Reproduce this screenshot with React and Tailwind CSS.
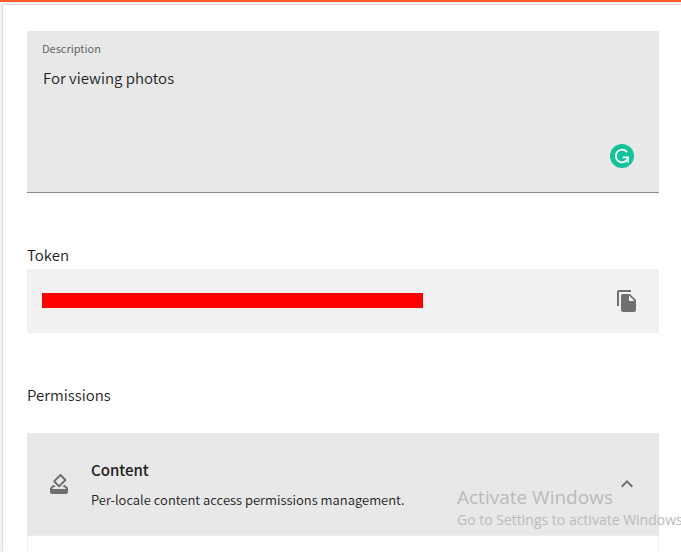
import React, { useState } from 'react';
import { MdFileCopy, MdHowToVote, MdExpandLess, MdExpandMore } from 'react-icons/md';

const GrammarBadge = () => (
  <svg viewBox="0 0 24 24" className="h-6 w-6" fill="none" aria-hidden="true">
    <circle cx="12" cy="12" r="12" fill="#15c39a" />
    <path
      d="M16.6 7.6A6.3 6.3 0 1 0 17.6 15"
      stroke="#fff"
      strokeWidth="1.7"
      strokeLinecap="round"
    />
    <path d="M13.4 13.4H18.2V18" stroke="#fff" strokeWidth="1.7" strokeLinecap="round" strokeLinejoin="round" />
  </svg>
);

const App = () => {
  const [description, setDescription] = useState('For viewing photos');
  const [open, setOpen] = useState(true);

  return (
    <div className="relative flex min-h-screen flex-col overflow-hidden border-t-2 border-[#ff5a26] bg-[#f5f5f5] pt-[3px] pl-[3px] font-['Noto_Sans_CJK_SC',sans-serif] font-[350] text-[#212121]">
      <main className="flex grow flex-col bg-white pt-[26px] pr-[22px] pl-6 shadow-[0_0_2px_rgba(0,0,0,0.3)]">
        {/* Description */}
        <div className="relative flex flex-col border-b border-[#8a8a8a] bg-[#e8e8e8] px-4 pt-[7px] pb-0.5">
          <label htmlFor="description" className="-ml-px text-[11px] leading-5 font-normal text-[#666]">
            Description
          </label>
          <textarea
            id="description"
            rows={5}
            value={description}
            onChange={(e) => setDescription(e.target.value)}
            spellCheck={false}
            className="mt-[7px] w-full resize-none bg-transparent text-[15px] leading-[25px] text-[#212121] outline-none"
          />
          <span className="absolute right-[25px] bottom-6">
            <GrammarBadge />
          </span>
        </div>

        {/* Token */}
        <section className="mt-[50px]">
          <h2 className="pb-0.5 text-[15px] leading-6">Token</h2>
          <div className="flex h-16 items-center justify-between bg-[#f1f1f1] pr-5 pl-[15px]">
            <div className="mb-px h-[15px] w-[381px] bg-[#f00]" />
            <button type="button" aria-label="Copy token" className="text-[#707070]">
              <MdFileCopy size={24} />
            </button>
          </div>
        </section>

        {/* Permissions */}
        <section className="mt-[50px] flex grow flex-col">
          <h2 className="pb-0.5 text-[15px] leading-6">Permissions</h2>
          <div className="mt-6 flex grow flex-col">
            <button
              type="button"
              aria-expanded={open}
              onClick={() => setOpen(!open)}
              className="flex h-[102px] items-center bg-[#e8e8e8] px-5 text-left text-[#6f6f6f]"
            >
              <MdHowToVote size={24} />
              <span className="ml-5 flex grow flex-col pt-0.5 text-[#212121]">
                <span className="text-[15px] leading-[30px] font-medium">Content</span>
                <span className="text-[13px] leading-[30px]">Per-locale content access permissions management.</span>
              </span>
              {open ? <MdExpandLess size={24} /> : <MdExpandMore size={24} />}
            </button>
            {open && <div className="grow border border-b-0 border-[#eee]" />}
          </div>
        </section>
      </main>

      {/* Activation watermark */}
      <div className="pointer-events-none absolute bottom-[21px] left-[457px] font-['Open_Sans',sans-serif] font-normal whitespace-nowrap text-[#bababa]">
        <p className="text-[19px] leading-6">Activate Windows</p>
        <p className="text-sm leading-[22px]">Go to Settings to activate Windows</p>
      </div>
    </div>
  );
};

export default App;
